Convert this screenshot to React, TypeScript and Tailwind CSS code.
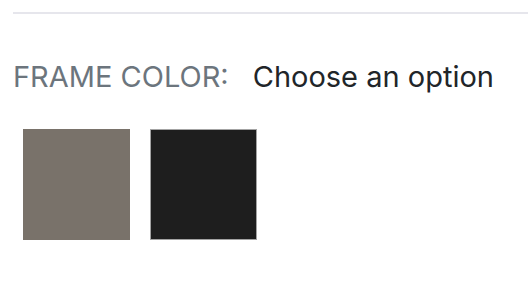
export default function App() {
  return (
    <div className="min-h-screen bg-white pl-[13px] pt-3 font-['Inter','Liberation_Sans',sans-serif]">
      <div className="h-[2px] bg-[#e6e6ec]" />
      <div className="mt-[45px] flex items-baseline text-[29px] leading-[35px]">
        <span className="text-[#6c757d]">FRAME COLOR:</span>
        <span className="ml-[24px] text-[#212529]">Choose an option</span>
      </div>
      <div className="mt-[35px] flex gap-[20px] pl-[10px]">
        <div className="h-[111px] w-[107px] bg-[#79726a]" />
        <div className="h-[111px] w-[107px] border border-[#a3a3a3] bg-[#1e1e1e]" />
      </div>
    </div>
  );
}
